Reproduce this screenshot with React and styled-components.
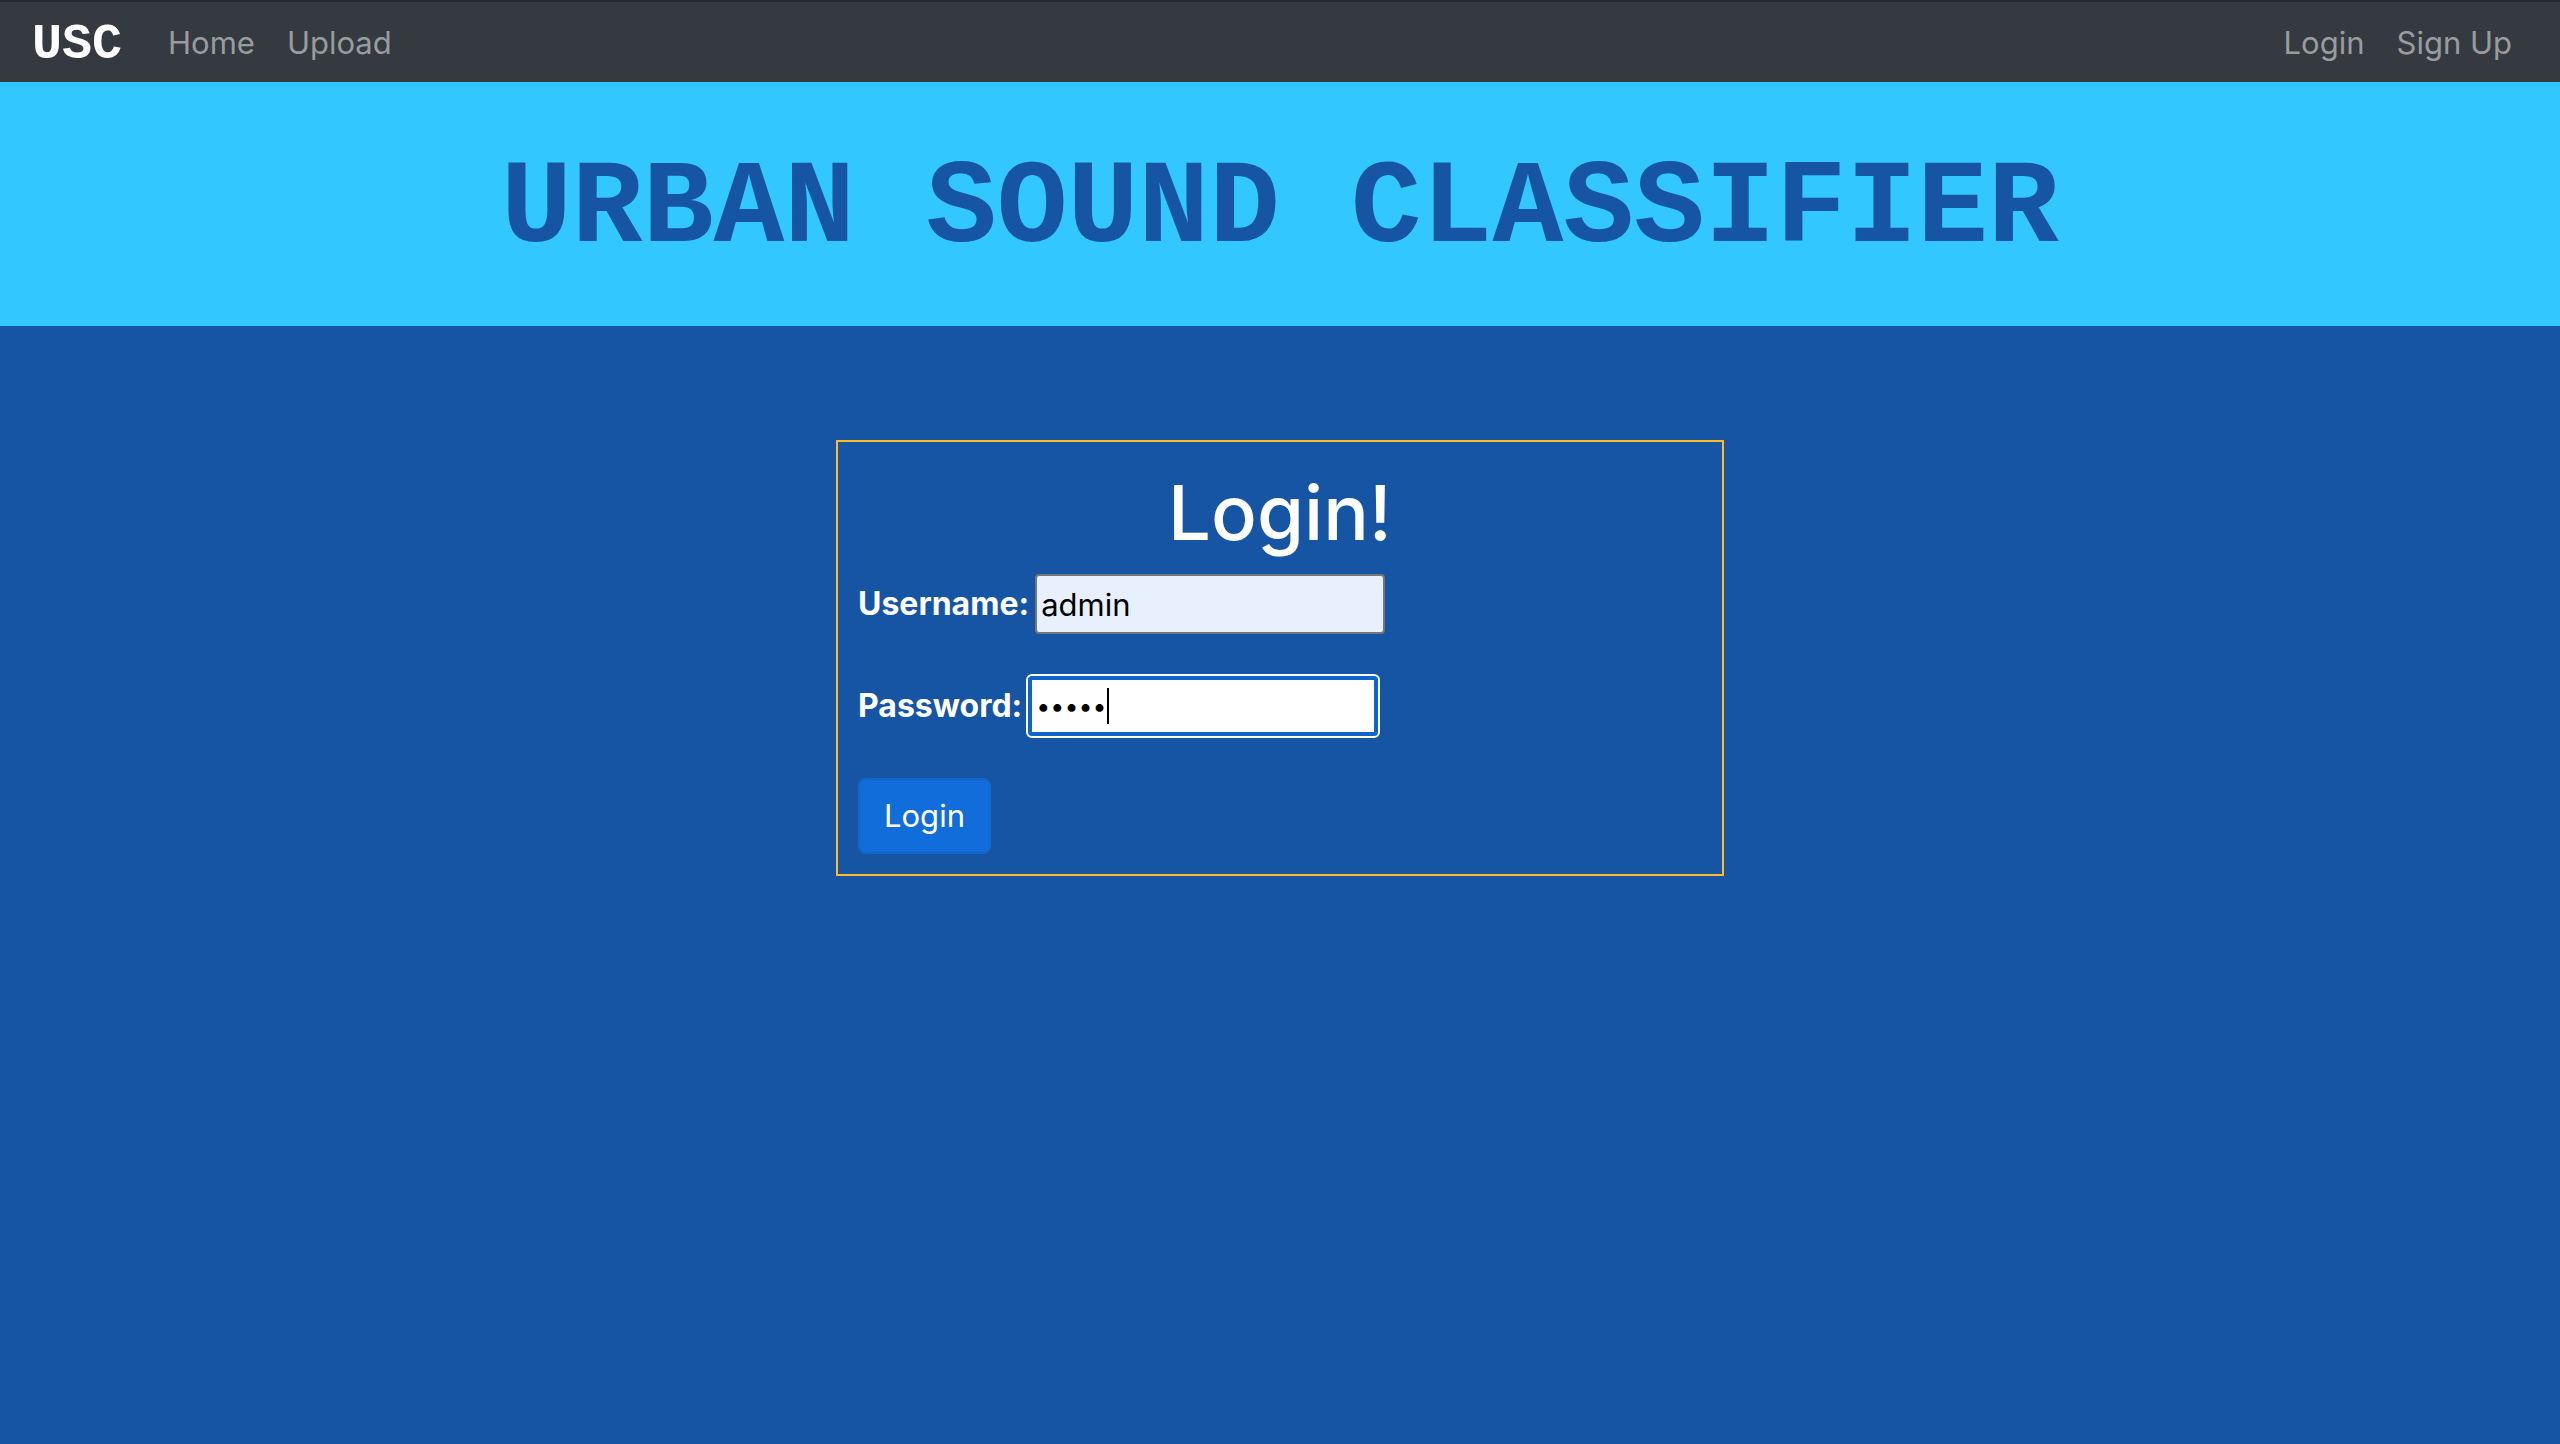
import React from 'react';
import styled, { createGlobalStyle } from 'styled-components';

const GlobalStyle = createGlobalStyle`
  *, *::before, *::after { box-sizing: border-box; }
  body {
    margin: 0;
    background: #1655a4;
    color: #fff;
    font-family: Inter, "Liberation Sans", sans-serif;
    font-size: 31px;
    line-height: 48px;
  }
`;

const Navbar = styled.nav`
  display: flex;
  align-items: center;
  justify-content: space-between;
  height: 82px;
  padding: 2px 32px 0;
  border-top: 2px solid #28292b;
  background: #343a40;
`;

const NavGroup = styled.div`
  display: flex;
  align-items: center;
`;

const Brand = styled.a`
  margin-right: 30px;
  padding-top: 4px;
  color: #fff;
  font-family: "Liberation Mono", monospace;
  font-size: 50px;
  font-weight: 700;
  text-decoration: none;
`;

const NavLink = styled.a`
  padding: 0 16px;
  color: #999c9f;
  text-decoration: none;
`;

const Banner = styled.header`
  padding: 56px 32px 44px;
  background: #33c7ff;
  color: #1655a4;
  text-align: center;
`;

const BannerTitle = styled.h1`
  margin: 0;
  font-family: "Liberation Mono", monospace;
  font-size: 118px;
  font-weight: 700;
  line-height: 144px;
`;

const Main = styled.main`
  display: flex;
  justify-content: center;
  padding: 114px 32px;
`;

const LoginForm = styled.form`
  width: 888px;
  max-width: 100%;
  padding: 20px;
  border: 2px solid #ffbb2b;
`;

const FormTitle = styled.h2`
  margin: 0 0 12px;
  font-size: 76px;
  font-weight: 500;
  line-height: 100px;
  text-align: center;
`;

const Field = styled.div`
  display: flex;
  align-items: center;
  gap: 6px;
  margin-bottom: 42px;
`;

const Label = styled.label`
  font-size: 32px;
  font-weight: 700;
`;

const InputWrap = styled.div`
  position: relative;
  display: flex;
`;

const Input = styled.input`
  width: 350px;
  height: 60px;
  padding: 2px 4px;
  border: 2px solid #767676;
  border-radius: 4px;
  background: ${(p) => (p.$filled ? '#e8f0fe' : '#fff')};
  color: #000;
  caret-color: transparent;
  font: inherit;

  &[type='password'] {
    font-size: 25px;
  }

  &:focus {
    border: 4px solid #1064ce;
    padding: 0 4px;
    outline: 2px solid #fff;
    outline-offset: 0;
  }
`;

const Caret = styled.span`
  position: absolute;
  top: 12px;
  left: 79px;
  width: 2px;
  height: 36px;
  background: #000;
  pointer-events: none;
`;

const SubmitButton = styled.button`
  display: block;
  height: 76px;
  padding: 0 24px;
  border: 2px solid #1366cb;
  border-radius: 8px;
  background: #116dd9;
  color: #fff;
  font: inherit;
`;

export default function App() {
  return (
    <>
      <GlobalStyle />
      <Navbar>
        <NavGroup>
          <Brand href="#">USC</Brand>
          <NavLink href="#home">Home</NavLink>
          <NavLink href="#upload">Upload</NavLink>
        </NavGroup>
        <NavGroup>
          <NavLink href="#login">Login</NavLink>
          <NavLink href="#signup">Sign Up</NavLink>
        </NavGroup>
      </Navbar>
      <Banner>
        <BannerTitle>URBAN SOUND CLASSIFIER</BannerTitle>
      </Banner>
      <Main>
        <LoginForm onSubmit={(e) => e.preventDefault()}>
          <FormTitle>Login!</FormTitle>
          <Field>
            <Label htmlFor="username">Username:</Label>
            <InputWrap>
              <Input id="username" type="text" defaultValue="admin" $filled />
            </InputWrap>
          </Field>
          <Field>
            <Label htmlFor="password">Password:</Label>
            <InputWrap>
              <Input id="password" type="password" defaultValue="admin" autoFocus />
              <Caret />
            </InputWrap>
          </Field>
          <SubmitButton type="submit">Login</SubmitButton>
        </LoginForm>
      </Main>
    </>
  );
}
